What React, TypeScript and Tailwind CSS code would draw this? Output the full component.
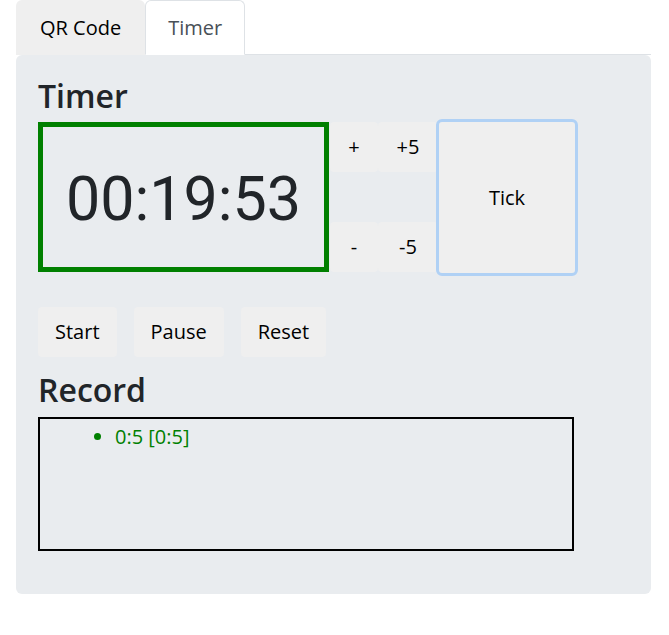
import { useState } from "react";

const font = { fontFamily: '"Open Sans", "Noto Sans", sans-serif' };

const TimerPanel = () => {
  const records = ["0:5 [0:5]"];

  return (
    <div className="rounded-md bg-[#e9ecef] px-[22px] pt-[22px] pb-[43px]">
      <h3 className="text-[32px] font-semibold leading-[1.2] text-[#212529]">Timer</h3>

      <div className="mt-[7px] flex items-stretch">
        <div className="flex h-[150px] w-[291px] items-center justify-center border-[5px] border-[#008000]">
          <span
            className="mt-1 text-[61px] leading-none text-[#212529]"
            style={{ fontFamily: 'Roboto, "Open Sans", sans-serif' }}
          >
            00:19:53
          </span>
        </div>

        <div className="ml-px grid h-[150px] grid-cols-[48px_60px] grid-rows-3">
          <button className="rounded bg-[#efefef] text-[20px] text-black">+</button>
          <button className="rounded bg-[#efefef] text-[20px] text-black">+5</button>
          <div className="col-span-2" />
          <button className="rounded bg-[#efefef] text-[20px] text-black">-</button>
          <button className="rounded bg-[#efefef] text-[20px] text-black">-5</button>
        </div>

        <button className="relative -my-[3px] -ml-[2px] h-[157px] w-[142px] rounded-md border-[3px] border-[#b0d1f5] bg-[#efefef] text-[20px] text-black">
          Tick
        </button>
      </div>

      <div className="mt-[34px] flex gap-[17px]">
        {["Start", "Pause", "Reset"].map((label) => (
          <button
            key={label}
            className="h-[50px] rounded bg-[#efefef] px-[17px] text-[20px] text-black"
          >
            {label}
          </button>
        ))}
      </div>

      <h3 className="mt-[14px] text-[32px] font-semibold leading-[1.2] text-[#212529]">Record</h3>

      <div className="mt-[7px] h-[134px] w-[536px] border-2 border-black pt-[3px]">
        <ul className="list-disc pl-[75px] marker:text-[#008000]">
          {records.map((r) => (
            <li key={r} className="text-[20px] leading-[1.5] text-[#008000]">
              {r}
            </li>
          ))}
        </ul>
      </div>
    </div>
  );
};

export default function App() {
  const [tab, setTab] = useState("timer");

  return (
    <div className="min-h-screen bg-white pl-4 pr-[18px] pb-10" style={font}>
      <div className="flex h-[55px] items-stretch border-b border-[#dee2e6]">
        <button
          onClick={() => setTab("qr")}
          className="-mb-px rounded-t-md bg-[#efefef] px-6 text-[20px] text-black"
        >
          QR Code
        </button>
        <button
          onClick={() => setTab("timer")}
          className="-mb-px rounded-t-md border border-b-white border-[#dee2e6] bg-white px-[22px] text-[20px] text-[#495057]"
        >
          Timer
        </button>
      </div>
      {tab === "timer" ? <TimerPanel /> : <TimerPanel />}
    </div>
  );
}
